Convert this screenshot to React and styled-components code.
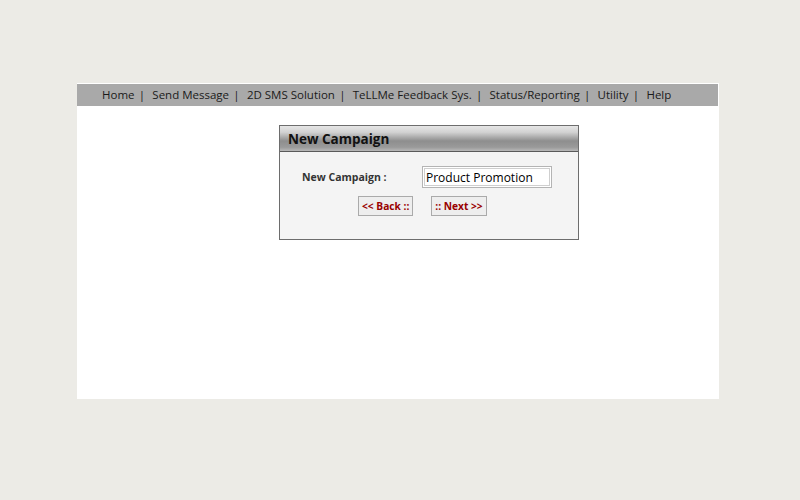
import React from 'react';
import styled, { createGlobalStyle } from 'styled-components';

const GlobalStyle = createGlobalStyle`
  html, body {
    margin: 0;
    padding: 0;
    background: #ecebe6;
    font-family: "Open Sans", "DejaVu Sans", sans-serif;
  }
`;

const Page = styled.div`
  padding-top: 83px;
  padding-left: 77px;
  width: 642px;
`;

const Wrapper = styled.div`
  background: #ffffff;
  height: 315px;
  padding-top: 1px;
`;

const NavBar = styled.div`
  background: #a9a9a9;
  height: 22px;
  box-sizing: border-box;
  padding-bottom: 2px;
  margin-right: 1px;
  display: flex;
  align-items: center;
  padding-left: 25px;
  font-size: 11.5px;
  color: #1a1a1a;
`;

const NavItem = styled.span`
  white-space: pre;
`;

const Sep = styled.span`
  margin: 0 7.25px 0 4.25px;
`;

const Content = styled.div`
  display: flex;
  padding-top: 19px;
  padding-left: 202px;
`;

const Panel = styled.div`
  width: 298px;
  height: 113px;
  border: 1px solid #6d6d6d;
  background: #f4f4f4;
`;

const PanelHeader = styled.div`
  height: 25px;
  border-bottom: 1px solid #5a5a5a;
  background: linear-gradient(#e6e6e6 0%, #d2d2d2 25%, #8e8e8e 60%, #9a9a9a 85%, #b8b8b8 100%);
  display: flex;
  align-items: center;
  padding-left: 8px;
  font-size: 13.5px;
  font-weight: bold;
  color: #111;
`;

const Form = styled.div`
  padding: 14px 0 0 22px;
`;

const Row = styled.div`
  display: flex;
  align-items: center;
`;

const Label = styled.span`
  width: 120px;
  font-size: 10.5px;
  font-weight: bold;
  color: #333;
`;

const Input = styled.input`
  box-sizing: border-box;
  width: 130px;
  height: 22px;
  border: 1px solid #b4b4b4;
  box-shadow: inset 0 0 0 1px #fff, inset 0 0 0 2px #cfcfcf;
  background: #fff;
  padding: 1px 3px 0;
  font-family: "Open Sans", "DejaVu Sans", sans-serif;
  font-size: 12px;
  color: #000;
  outline: none;
`;

const Buttons = styled.div`
  display: flex;
  gap: 18px;
  margin-top: 8px;
  padding-left: 56px;
`;

const Button = styled.button`
  height: 20px;
  padding: 0 3px;
  border: 1px solid #aaa;
  background: #eeeeee;
  color: #990000;
  font-family: "Open Sans", "DejaVu Sans", sans-serif;
  font-size: 10.2px;
  font-weight: bold;
  cursor: pointer;
`;

const links = ['Home', 'Send Message', '2D SMS Solution', 'TeLLMe Feedback Sys.', 'Status/Reporting', 'Utility', 'Help'];

const App = () => {
  return (
    <>
      <GlobalStyle />
      <Page>
        <Wrapper>
          <NavBar>
            {links.map((l, i) => (
              <NavItem key={l}>
                {l}
                {i < links.length - 1 && <Sep>|</Sep>}
              </NavItem>
            ))}
          </NavBar>
          <Content>
            <Panel>
              <PanelHeader>New Campaign</PanelHeader>
              <Form>
                <Row>
                  <Label>New Campaign :</Label>
                  <Input defaultValue="Product Promotion" />
                </Row>
                <Buttons>
                  <Button>&lt;&lt; Back ::</Button>
                  <Button>:: Next &gt;&gt;</Button>
                </Buttons>
              </Form>
            </Panel>
          </Content>
        </Wrapper>
      </Page>
    </>
  );
};

export default App;
